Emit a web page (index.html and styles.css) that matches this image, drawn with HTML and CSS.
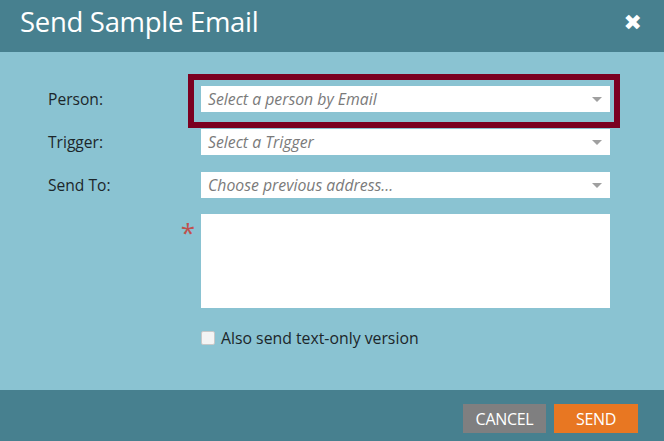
FILE: index.html
```html
<!DOCTYPE html>
<html>
<head>
<meta charset="utf-8">
<link rel="stylesheet" href="styles.css">
</head>
<body>
<div class="dialog">
  <div class="header">
    <h1 class="title">Send Sample Email</h1>
    <span class="close">&#x2716;</span>
  </div>
  <div class="content">
    <div class="form">
      <label class="label">Person:</label>
      <div class="field highlighted">
        <div class="select"><span class="ph">Select a person by Email</span><span class="arrow"></span></div>
        <div class="callout"></div>
      </div>
      <label class="label">Trigger:</label>
      <div class="field">
        <div class="select"><span class="ph">Select a Trigger</span><span class="arrow"></span></div>
      </div>
      <label class="label">Send To:</label>
      <div class="field">
        <div class="select"><span class="ph">Choose previous address...</span><span class="arrow"></span></div>
      </div>
      <div class="label req">*</div>
      <div class="field">
        <div class="textarea"></div>
      </div>
      <div class="label"></div>
      <div class="field check-row">
        <span class="checkbox"></span>
        <span class="check-label">Also send text-only version</span>
      </div>
    </div>
  </div>
  <div class="footer">
    <button class="btn cancel">CANCEL</button>
    <button class="btn send">SEND</button>
  </div>
</div>
</body>
</html>
```
FILE: styles.css
```css
html, body {
  margin: 0;
  padding: 0;
}
body {
  font-family: "Open Sans", "DejaVu Sans", sans-serif;
  width: 664px;
  height: 441px;
  overflow: hidden;
  background: #8ac3d2;
}
.dialog {
  display: flex;
  flex-direction: column;
  height: 441px;
}
.header {
  height: 52px;
  background: #47808f;
  display: flex;
  align-items: center;
  justify-content: space-between;
  padding: 0 22px 0 20px;
}
.title {
  margin: 0;
  font-weight: 400;
  font-size: 27.5px;
  color: #ffffff;
  letter-spacing: -0.3px;
  line-height: 1;
  margin-top: -9px;
}
.close {
  color: #ffffff;
  font-size: 22px;
  font-family: "DejaVu Sans", sans-serif;
  margin-top: -8px;
}
.content {
  flex: 1;
  padding: 34px 0 0 48px;
}
.form {
  display: grid;
  grid-template-columns: 153px 409px;
  row-gap: 17px;
  align-items: center;
}
.label {
  font-size: 15.6px;
  color: #1c262a;
}
.req {
  align-self: start;
  text-align: right;
  padding-right: 6px;
  color: #c0504d;
  font-size: 26px;
  line-height: 26px;
  margin-top: 4px;
}
.field {
  position: relative;
}
.select {
  height: 26px;
  background: #ffffff;
  display: flex;
  align-items: center;
  justify-content: space-between;
  padding: 0 8px 0 7px;
}
.ph {
  font-style: italic;
  font-size: 15.8px;
  color: #7a7a7a;
}
.arrow {
  width: 0;
  height: 0;
  border-left: 5px solid transparent;
  border-right: 5px solid transparent;
  border-top: 5px solid #a0a0a0;
}
.callout {
  position: absolute;
  left: -13px;
  top: -12px;
  width: 432px;
  height: 54px;
  box-sizing: border-box;
  border: 6px solid #7b0020;
}
.textarea {
  height: 94px;
  background: #ffffff;
  margin-top: -1px;
}
.check-row {
  display: flex;
  align-items: center;
  gap: 6px;
  margin-top: 2px;
}
.checkbox {
  width: 12px;
  height: 12px;
  background: #f4f4f4;
  border: 1px solid #c8c8c8;
  border-radius: 2px;
}
.check-label {
  font-size: 15.8px;
  color: #1c262a;
}
.footer {
  height: 51px;
  background: #47808f;
  display: flex;
  justify-content: flex-end;
  align-items: center;
  gap: 8px;
  padding-right: 26px;
}
.btn {
  border: none;
  height: 29px;
  color: #ffffff;
  font-family: "Open Sans", sans-serif;
  font-size: 16px;
  padding: 0;
  letter-spacing: -0.3px;
  margin-top: 6px;
}
.cancel {
  width: 83px;
  background: #7f7f80;
}
.send {
  width: 84px;
  background: #e87722;
}
```
